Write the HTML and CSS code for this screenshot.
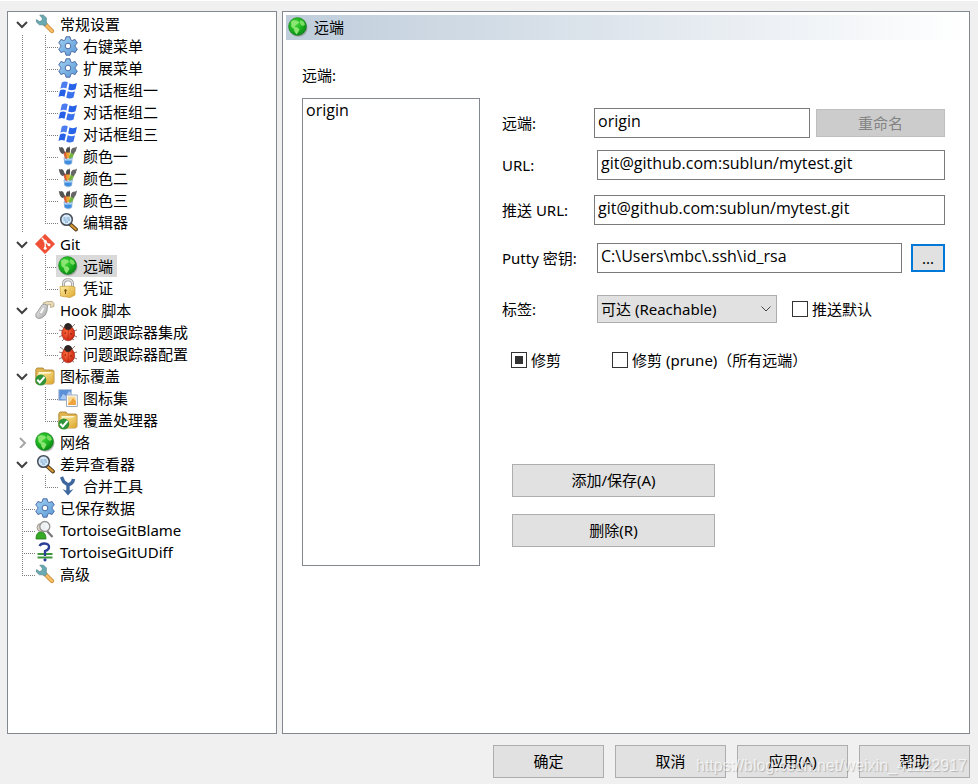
FILE: index.html
```
<!DOCTYPE html>
<html lang="zh-CN">
<head>
  <meta charset="UTF-8">
  <meta name="viewport" content="width=device-width, initial-scale=1.0">
  <title>设置 - TortoiseGit</title>
  <link rel="stylesheet" href="styles.css">
</head>
<body>
  <!-- Icon set -->
  <svg class="sprite" aria-hidden="true">
    <defs>
      <linearGradient id="gear-fill" x1="0" y1="0" x2="1" y2="1">
        <stop offset="0" stop-color="#9fd0f0"/><stop offset="1" stop-color="#5b9ad8"/>
      </linearGradient>
      <radialGradient id="globe-fill" cx="0.4" cy="0.35" r="0.65">
        <stop offset="0" stop-color="#3fd93a"/><stop offset="0.6" stop-color="#1cb01f"/><stop offset="1" stop-color="#0c8a17"/>
      </radialGradient>
      <linearGradient id="gold-fill" x1="0" y1="0" x2="1" y2="1">
        <stop offset="0" stop-color="#fff1a8"/><stop offset="1" stop-color="#dca52c"/>
      </linearGradient>
      <linearGradient id="metal-fill" x1="0" y1="0" x2="1" y2="1">
        <stop offset="0" stop-color="#f4f4f4"/><stop offset="1" stop-color="#a5a5a5"/>
      </linearGradient>
      <radialGradient id="bug-fill" cx="0.4" cy="0.4" r="0.65">
        <stop offset="0" stop-color="#ff6a3c"/><stop offset="1" stop-color="#c82410"/>
      </radialGradient>
    </defs>
    <symbol id="wrench" viewBox="0 0 20 20">
      <path d="M9.5 9.5 17 17" stroke="#c98a35" stroke-width="4.200" stroke-linecap="round"/>
      <path d="M9.5 9.5 17 17" stroke="#f7bd66" stroke-width="2.6" stroke-linecap="round"/>
      <path d="M4.8 1.2 8.6 1.2 11.4 4 11.2 8.2 12 9.6 9.8 12 8 10.8 4.4 10.8 1.4 8 1.6 5.6 4.4 7.6 7 6.8 7.4 4.2Z" fill="#68abb3" stroke="#51838c" stroke-width=".7"/>
    </symbol>
    <symbol id="gear" viewBox="0 0 20 20">
      <path fill-rule="evenodd" d="M8 .8h4l.7 2.900 1.400.8 3-1 2.200 3.600-2.100 2.100v1.600l2.100 2.100-2.200 3.600-3-1-1.400.8-.7 2.900H8l-.7-2.900-1.400-.8-3 1-2.200-3.600 2.100-2.100V9.200L.7 7.100l2.200-3.600 3 1 1.400-.8ZM10 7.200a2.800 2.800 0 1 0 0 5.600 2.800 2.800 0 0 0 0-5.600Z" fill="url(#gear-fill)" stroke="#4f6ba6" stroke-width="1" stroke-linejoin="round"/>
    </symbol>
    <symbol id="flag" viewBox="0 0 20 20">
      <path d="M3.8 2.6q3-2 6-.3L8.4 8.6q-3-1.6-6 .2Z" fill="#4b7df0"/>
      <path d="M11.5 3.2q3.4 1.9 7.5-.1l-1.5 6.2q-3.8 1.9-7.3.2Z" fill="#2763e8"/>
      <path d="M2 10.6q3-1.9 6-.2l-1.5 6.300q-3-1.600-6 .2Z" fill="#2560e6"/>
      <path d="M9.700 11.300q3.600 1.700 7.300-.1l-1.500 6.200q-3.800 1.900-7.300.1Z" fill="#3a72ee"/>
    </symbol>
    <symbol id="brushes" viewBox="0 0 20 20">
      <path d="M5 6 8.500 5.500 10 12 7.500 14Z" fill="#d9603a"/>
      <path d="M8 5.500h4L11.500 12H8.800Z" fill="#f0a52c"/>
      <path d="M13 6 16.500 7 13.500 14 10.500 12Z" fill="#74b33d"/>
      <path d="M.8.8q1.500 1.200 3.200.2 2 1.200 2.200 3.200l1 2.400-2.600 1.400q-3-1-3.800-7.200Z" fill="#555"/>
      <path d="M8 6.500Q7.500 2.800 9.200 1.500q1.800.2 2.300-1.200 1.200 2.700.3 6.200Z" fill="#4c4c4c"/>
      <path d="M12.800 6.500q0-3.800 2.200-4.700 2 .3 4-1.400-.2 4.400-3.600 7.800Z" fill="#666"/>
      <path d="M6 11.500 8.500 13h3.500l2.300-1.500-.6 6q-3.200 3-7 0Z" fill="#b9dcf8" stroke="#7899c3" stroke-width=".6"/>
      <path d="M6.500 14.500h7.200l-.3 2.800q-3.200 2-6.600 0Z" fill="#3f8de0"/>
    </symbol>
    <symbol id="magnifier" viewBox="0 0 20 20">
      <path d="m12 12 6 5.500" stroke="#59401f" stroke-width="3.8" stroke-linecap="round"/>
      <path d="m13 13 4.800 4.300" stroke="#d99a31" stroke-width="2" stroke-linecap="round"/>
      <circle cx="8.500" cy="7.500" r="5.800" fill="#d6eaf9" stroke="#454d57" stroke-width="1.500"/>
      <path d="M5.500 6h2m1 0h3m-6 2h3m1 0h2.500m-5 2h3" stroke="#6f9dc7" stroke-width="1"/>
    </symbol>
    <symbol id="git" viewBox="0 0 20 20">
      <path d="M10 .3 19.700 10 10 19.700.3 10Z" fill="#ef4f34" stroke="#ef4f34" stroke-linejoin="round" stroke-width=".6"/>
      <path d="m6.800 3.700 3.400 3.500v7.500m0-7 3.800 3.400" fill="none" stroke="#fff" stroke-width="1.300"/>
      <circle cx="10.200" cy="7.200" r="1.500" fill="#fff"/><circle cx="10.200" cy="14.300" r="1.500" fill="#fff"/><circle cx="14" cy="10.800" r="1.500" fill="#fff"/>
    </symbol>
    <symbol id="globe" viewBox="0 0 20 20">
      <circle cx="10.600" cy="10.800" r="9" fill="#777" opacity=".45"/>
      <circle cx="9.500" cy="9.500" r="9" fill="url(#globe-fill)" stroke="#16781c" stroke-width=".5"/>
      <path d="M3 4.500 6 3l4 1 1 2-3 2-1.500 2 3 .5 2 2-1.500 3-1.500 2-2-3-.5-2.500-2.500-2Z" fill="#8be573"/>
      <path d="m12.500 3 3 1.500 1.500 3-2 1.500-2-1-1.500-2.500Z" fill="#78dc62"/>
    </symbol>
    <symbol id="lock" viewBox="0 0 20 20">
      <path d="M5.500 10V6q0-4.200 4.500-4.200T14.500 6v4" fill="none" stroke="#999" stroke-width="3"/>
      <path d="M5.500 10V6q0-4.200 4.500-4.200T14.500 6v4" fill="none" stroke="#e2e2e2" stroke-width="1.400"/>
      <path d="m2 8.500 10-.5 5 1v8l-5 2.500-9.500-1.500Z" fill="url(#gold-fill)" stroke="#c99b31" stroke-width=".7"/>
      <path d="M12 9v10" stroke="#e6bd4d"/><circle cx="7.500" cy="12.500" r="1.200" fill="#715015"/><path d="M7.500 12.500V16" stroke="#715015"/>
    </symbol>
    <symbol id="hook" viewBox="0 0 20 20">
      <path d="M8 3q4-2.500 9.500-1.500 2 1.500 1.500 5l-3.500 1 .2-3L12 5l-1 4Z" fill="#e9dbb9" stroke="#aa9870" stroke-width=".7"/>
      <path d="M7 5q3-2 5.500.5L12 11q-1 5-5.500 7-3.500 1.500-5.500-1-1.300-3 2-6Z" fill="url(#metal-fill)" stroke="#8d8d8d" stroke-width=".8"/>
      <path d="m4 13 4-6 2 1-3 6Z" fill="#f9f9f9" stroke="#aaa" stroke-width=".5"/>
    </symbol>
    <symbol id="bug" viewBox="0 0 20 20">
      <path d="m6 6-4-3m3 6L1 8m4 5-4 2m6 1-3 3M13 6l4-4m-2 7 4-1m-4 5 4 2m-6 1 3 2" stroke="#8b6a61" stroke-width=".9"/>
      <path d="M6 6q0-4.500 4-5 4 .5 4.500 5Z" fill="#292322"/>
      <ellipse cx="10.200" cy="11.500" rx="6.500" ry="7.300" fill="url(#bug-fill)" stroke="#8d1a0e" stroke-width=".5"/>
      <path d="M6.500 5.500q3.500-4 7 0-1 2.500-3.500 2.500t-3.500-2.500Z" fill="#302523"/>
      <path d="M10.200 8v10" stroke="#a32011" stroke-width=".6"/>
      <circle cx="7.300" cy="11" r=".8" fill="#7e180c"/><circle cx="13" cy="12" r=".8" fill="#7e180c"/>
    </symbol>
    <symbol id="folder" viewBox="0 0 20 20">
      <path d="M.8 3.500 2 2h6l1.500 2H18l1 1.500v11L17.500 18H2L.8 16.500Z" fill="#e0b450" stroke="#a77a24" stroke-width=".8"/>
      <path d="M3.500 6h13v10h-13Z" fill="#fff7cf"/>
      <path d="m2.500 8 12-.5 4-2v11L17 18H2Z" fill="url(#gold-fill)"/>
      <circle cx="5.800" cy="14" r="5.500" fill="#31943a"/>
      <path d="m2.300 13.800 2.500 2.700 4.800-5.700" fill="none" stroke="#fff" stroke-width="2"/>
    </symbol>
    <symbol id="pictures" viewBox="0 0 20 20">
      <path d="M.7 1.500h12.800v11H.7Z" fill="#5d91d7" stroke="#b7c5db"/>
      <path d="M2 11 5 6l3 2 3-5 2 2v7Z" fill="#a9c9f2"/>
      <path d="M8.500 7h10.800v11.500H8.500Z" fill="#fff" stroke="#9da9bb"/>
      <path d="M10 8.500h7.800V17H10Z" fill="#fbd891"/><path d="m10 16 3-3 2-3 2.800 3v4H10Z" fill="#f0a33d"/>
    </symbol>
    <symbol id="merge" viewBox="0 0 20 20">
      <path d="m3.500 1 2.300 5L10 9q5-1.500 5.500-6M10 8.500V16" fill="none" stroke="#3e679f" stroke-width="3.400"/>
      <path d="m4.500 13 5.500 6.500 5.500-6.500-3.500 1.500H8Z" fill="#3e679f"/>
    </symbol>
    <symbol id="blame" viewBox="0 0 20 20">
      <path d="M1 19q0-7 5-7.500 5 .5 5 7.500Z" fill="#36a926" stroke="#217916" stroke-width=".8"/>
      <circle cx="6" cy="7.500" r="4" fill="#e2d3c5" stroke="#878787" stroke-width=".8"/>
      <path d="m12 11 5.500 6" stroke="#777" stroke-width="2.200"/>
      <circle cx="9.800" cy="6.500" r="5" fill="#f0f3f5" fill-opacity=".9" stroke="#929292" stroke-width="1.300"/>
    </symbol>
    <symbol id="udiff" viewBox="0 0 20 20">
      <path d="M2.500 12h15M2.500 15.500h15" stroke="#3e973c" stroke-width="2"/>
      <path d="M4.500 4Q6 1.300 9.500 1.500q5 .3 4.500 4-.3 2.300-4 3.500V14" fill="none" stroke="#2b3e95" stroke-width="2.300"/>
      <circle cx="10" cy="17.800" r="1.600" fill="#2b3e95"/>
    </symbol>
    <symbol id="chevron-down" viewBox="0 0 12 12"><path d="m1 4 5 5 5-5" fill="none" stroke="#404040" stroke-width="2"/></symbol>
    <symbol id="chevron-right" viewBox="0 0 12 12"><path d="m4 2 5 5-5 5" fill="none" stroke="#a6a6a6" stroke-width="2"/></symbol>
  </svg>

  <main class="content">
    <!-- Settings tree -->
    <nav class="panel tree-panel">
      <ul class="tree">
        <li>
          <div class="node"><svg class="chevron"><use href="#chevron-down"/></svg><svg class="icon"><use href="#wrench"/></svg><span class="text">常规设置</span></div>
          <ul class="children">
            <li class="node"><svg class="icon"><use href="#gear"/></svg><span class="text">右键菜单</span></li>
            <li class="node"><svg class="icon"><use href="#gear"/></svg><span class="text">扩展菜单</span></li>
            <li class="node"><svg class="icon"><use href="#flag"/></svg><span class="text">对话框组一</span></li>
            <li class="node"><svg class="icon"><use href="#flag"/></svg><span class="text">对话框组二</span></li>
            <li class="node"><svg class="icon"><use href="#flag"/></svg><span class="text">对话框组三</span></li>
            <li class="node"><svg class="icon"><use href="#brushes"/></svg><span class="text">颜色一</span></li>
            <li class="node"><svg class="icon"><use href="#brushes"/></svg><span class="text">颜色二</span></li>
            <li class="node"><svg class="icon"><use href="#brushes"/></svg><span class="text">颜色三</span></li>
            <li class="node"><svg class="icon"><use href="#magnifier"/></svg><span class="text">编辑器</span></li>
          </ul>
        </li>
        <li>
          <div class="node"><svg class="chevron"><use href="#chevron-down"/></svg><svg class="icon"><use href="#git"/></svg><span class="text">Git</span></div>
          <ul class="children">
            <li class="node"><span class="selected"><svg class="icon"><use href="#globe"/></svg><span class="text">远端</span></span></li>
            <li class="node"><svg class="icon"><use href="#lock"/></svg><span class="text">凭证</span></li>
          </ul>
        </li>
        <li>
          <div class="node"><svg class="chevron"><use href="#chevron-down"/></svg><svg class="icon"><use href="#hook"/></svg><span class="text">Hook 脚本</span></div>
          <ul class="children">
            <li class="node"><svg class="icon"><use href="#bug"/></svg><span class="text">问题跟踪器集成</span></li>
            <li class="node"><svg class="icon"><use href="#bug"/></svg><span class="text">问题跟踪器配置</span></li>
          </ul>
        </li>
        <li>
          <div class="node"><svg class="chevron"><use href="#chevron-down"/></svg><svg class="icon"><use href="#folder"/></svg><span class="text">图标覆盖</span></div>
          <ul class="children">
            <li class="node"><svg class="icon"><use href="#pictures"/></svg><span class="text">图标集</span></li>
            <li class="node"><svg class="icon"><use href="#folder"/></svg><span class="text">覆盖处理器</span></li>
          </ul>
        </li>
        <li>
          <div class="node"><svg class="chevron"><use href="#chevron-right"/></svg><svg class="icon"><use href="#globe"/></svg><span class="text">网络</span></div>
        </li>
        <li>
          <div class="node"><svg class="chevron"><use href="#chevron-down"/></svg><svg class="icon"><use href="#magnifier"/></svg><span class="text">差异查看器</span></div>
          <ul class="children">
            <li class="node"><svg class="icon"><use href="#merge"/></svg><span class="text">合并工具</span></li>
          </ul>
        </li>
        <li class="node leaf"><svg class="icon"><use href="#gear"/></svg><span class="text">已保存数据</span></li>
        <li class="node leaf"><svg class="icon"><use href="#blame"/></svg><span class="text">TortoiseGitBlame</span></li>
        <li class="node leaf"><svg class="icon"><use href="#udiff"/></svg><span class="text">TortoiseGitUDiff</span></li>
        <li class="node leaf"><svg class="icon"><use href="#wrench"/></svg><span class="text">高级</span></li>
      </ul>
    </nav>

    <!-- Remote page -->
    <section class="panel page">
      <h1 class="page-title"><svg class="icon"><use href="#globe"/></svg>远端</h1>
      <div class="page-body">
        <div class="remotes">
          <label for="remote-list">远端:</label>
          <select id="remote-list" class="remote-list" size="20">
            <option>origin</option>
          </select>
        </div>

        <form id="remote-form" class="remote-form">
          <div class="row">
            <label for="remote">远端:</label>
            <input type="text" id="remote" value="origin">
            <button type="button" class="rename" disabled>重命名</button>
          </div>
          <div class="row row-url">
            <label for="url">URL:</label>
            <input type="text" id="url" class="inset" value="git@github.com:sublun/mytest.git">
          </div>
          <div class="row row-push">
            <label for="push-url">推送 URL:</label>
            <input type="text" id="push-url" value="git@github.com:sublun/mytest.git">
          </div>
          <div class="row row-putty">
            <label for="putty-key">Putty 密钥:</label>
            <input type="text" id="putty-key" class="inset" value="C:\Users\mbc\.ssh\id_rsa">
            <button type="button" class="browse">...</button>
          </div>
          <div class="row row-tags">
            <label for="tags">标签:</label>
            <select id="tags" class="tags inset">
              <option>可达 (Reachable)</option>
            </select>
            <div class="check"><input type="checkbox" id="push-default"><label for="push-default">推送默认</label></div>
          </div>
          <div class="prune">
            <div class="check"><input type="checkbox" id="prune"><label for="prune">修剪</label></div>
            <div class="check"><input type="checkbox" id="prune-all"><label for="prune-all">修剪 (prune)（所有远端）</label></div>
          </div>
          <div class="actions">
            <button type="button">添加/保存(A)</button>
            <button type="button">删除(R)</button>
          </div>
        </form>
      </div>
    </section>
  </main>

  <footer class="buttons">
    <button type="button">确定</button>
    <button type="button">取消</button>
    <button type="button">应用(A)</button>
    <button type="button">帮助</button>
    <span class="watermark">https://blog.csdn.net/weixin_41122917</span>
  </footer>

  <script>
    // The prune box starts in its third state
    document.getElementById('prune').indeterminate = true;
  </script>
</body>
</html>
```

FILE: styles.css
```
* {
  margin: 0;
  padding: 0;
  box-sizing: border-box;
}

body {
  font-family: "Noto Sans", "Noto Sans CJK SC", sans-serif;
  font-size: 15px;
  line-height: 22px;
  color: #000;
  background: #f0f0f0;
  border-top: 1px solid #fff;
  min-height: 100vh;
  display: flex;
  flex-direction: column;
  padding: 10px 8px 6px 7px;
}

.sprite {
  position: absolute;
  width: 0;
  height: 0;
}

ul {
  list-style: none;
}

input,
select,
button {
  font: inherit;
  color: inherit;
  outline: none;
  border-radius: 0;
}

.content {
  flex: 1;
  display: flex;
  gap: 5px;
}

.panel {
  background: #fff;
  border: 1px solid #828790;
}

.icon {
  width: 20px;
  height: 20px;
  flex: none;
}

/* Tree */
.tree-panel {
  flex: 0 0 270px;
  padding-top: 1px;
}

.node {
  display: flex;
  align-items: center;
  height: 22px;
  padding-left: 27px;
  white-space: nowrap;
}

.text {
  padding: 0 4px 0 5px;
}

.chevron {
  width: 12px;
  height: 12px;
  margin: 0 7px 0 -19px;
}

.children {
  background: repeating-linear-gradient(to bottom, #808080 0 1px, transparent 1px 2px) 14px 0 / 1px 100% no-repeat;
}

.children .node {
  padding-left: 50px;
  background:
    repeating-linear-gradient(to bottom, #808080 0 1px, transparent 1px 2px) 37px 0 / 1px 100% no-repeat,
    repeating-linear-gradient(to right, #808080 0 1px, transparent 1px 2px) 37px 12px / 13px 1px no-repeat;
}

.leaf {
  background:
    repeating-linear-gradient(to bottom, #808080 0 1px, transparent 1px 2px) 14px 0 / 1px 100% no-repeat,
    repeating-linear-gradient(to right, #808080 0 1px, transparent 1px 2px) 14px 12px / 13px 1px no-repeat;
}

.children .node:last-child,
.leaf:last-child {
  background-size: 1px 12px, 13px 1px;
}

.selected {
  display: flex;
  align-items: center;
  height: 22px;
  margin-left: -2px;
  padding-left: 2px;
  background: #d9d9d9;
}

/* Page */
.page {
  flex: 1;
  min-width: 0;
  padding: 3px;
}

.page-title {
  display: flex;
  align-items: center;
  gap: 6px;
  height: 25px;
  padding: 0 0 2px 2px;
  font-size: 15px;
  font-weight: normal;
  background: linear-gradient(to right, #bfcddb, #fff);
}

.page-body {
  display: flex;
  gap: 22px;
  padding: 24px 21px 0 16px;
}

.remotes {
  flex: 0 0 178px;
  display: flex;
  flex-direction: column;
  gap: 12px;
}

.remote-list {
  height: 468px;
  border: 1px solid #828790;
  background: #fff;
  font-family: "Open Sans", sans-serif;
  font-size: 16px;
  overflow: hidden;
}

.remote-list option {
  padding: 0 3px;
}

.remote-form {
  flex: 1;
  min-width: 0;
  padding-top: 44px;
}

.row {
  display: flex;
  align-items: center;
}

.row > label {
  flex: 0 0 92px;
}

.row-url {
  margin-top: 12px;
}

.row-push {
  margin-top: 15px;
}

.row-putty {
  margin-top: 18px;
}

.row-tags {
  margin-top: 22px;
}

input[type="text"] {
  flex: 1;
  min-width: 0;
  height: 30px;
  padding: 0 3px 4px;
  border: 1px solid #7a7a7a;
  background: #fff;
  font-family: "Open Sans", sans-serif;
  font-size: 16px;
}

.row .inset {
  margin-left: 3px;
}

button {
  height: 33px;
  padding-bottom: 2px;
  background: #e1e1e1;
  border: 1px solid #adadad;
}

.rename {
  flex: 0 0 129px;
  height: 28px;
  margin-left: 6px;
  padding-bottom: 0;
  color: #838383;
  background: #ccc;
  border-color: #bfbfbf;
}

.browse {
  flex: 0 0 34px;
  height: 28px;
  margin-left: 9px;
  padding-bottom: 0;
  border: 2px solid #0078d7;
}

.tags {
  appearance: none;
  flex: 0 0 180px;
  height: 28px;
  margin-right: 15px;
  padding: 0 3px;
  border: 1px solid #adadad;
  background: #e1e1e1 url("data:image/svg+xml,%3Csvg xmlns='http://www.w3.org/2000/svg' width='10' height='6'%3E%3Cpath d='M.5.5 5 5 9.5.5' fill='none' stroke='%23444'/%3E%3C/svg%3E") right 5px center no-repeat;
}

.check {
  display: flex;
  align-items: center;
  gap: 4px;
  white-space: nowrap;
}

input[type="checkbox"] {
  appearance: none;
  width: 16px;
  height: 16px;
  border: 1px solid #333;
  background: #fff;
}

input[type="checkbox"]:indeterminate {
  padding: 3px;
  background: #333 content-box;
}

.prune {
  display: flex;
  gap: 51px;
  margin-top: 26px;
  padding-left: 9px;
}

.actions {
  display: flex;
  flex-direction: column;
  gap: 17px;
  width: 213px;
  margin-top: 93px;
  padding-left: 10px;
}

/* Bottom buttons */
.buttons {
  position: relative;
  display: flex;
  justify-content: flex-end;
  gap: 11px;
  padding-top: 11px;
}

.buttons button {
  width: 111px;
}

.watermark {
  position: absolute;
  right: 3px;
  bottom: 1px;
  font-family: "Liberation Sans", sans-serif;
  font-size: 16px;
  color: rgba(255, 255, 255, 0.7);
  text-shadow: 1px 1px 1px rgba(0, 0, 0, 0.2);
  pointer-events: none;
}
```
